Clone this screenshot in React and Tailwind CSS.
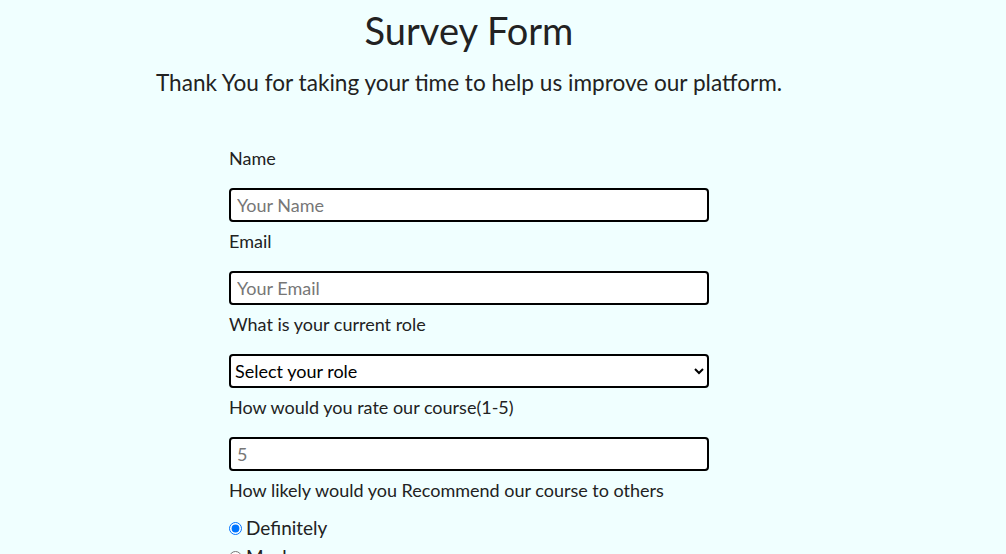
export default function App() {
  const font = { fontFamily: '"Lato", "Liberation Sans", sans-serif' };
  const fields = [
    { label: "Name", type: "text", placeholder: "Your Name" },
    { label: "Email", type: "email", placeholder: "Your Email" },
  ];

  return (
    <div className="min-h-[554px] bg-[#f0ffff] text-[#222]" style={font}>
      <div className="w-[938px] flex flex-col items-center">
        <h1 className="text-[38px] leading-[52px] mt-[4px] font-normal">Survey Form</h1>
        <p className="text-[22.6px] leading-[30px] mt-[12px]">
          Thank You for taking your time to help us improve our platform.
        </p>

        <form className="w-[480px] mt-[41px]">
          {fields.map((f) => (
            <div key={f.label}>
              <label className="block text-[18px] leading-[24px] pt-[7px] mb-[18px]">{f.label}</label>
              <input
                type={f.type}
                placeholder={f.placeholder}
                className="block w-full h-[34px] border-2 border-black rounded-[4px] bg-white px-[6px] text-[18px] placeholder:text-[#777] outline-none"
              />
            </div>
          ))}

          <label className="block text-[18px] leading-[24px] pt-[7px] mb-[18px]">What is your current role</label>
          <select className="block w-full h-[34px] border-2 border-black rounded-[4px] bg-white px-0 text-[18px] text-black outline-none">
            <option>Select your role</option>
            <option>Student</option>
            <option>Full Time Job</option>
            <option>Other</option>
          </select>

          <label className="block text-[18px] leading-[24px] pt-[7px] mb-[18px]">How would you rate our course(1-5)</label>
          <input
            type="number"
            min="1"
            max="5"
            placeholder="5"
            className="block w-full h-[34px] border-2 border-black rounded-[4px] bg-white px-[6px] text-[18px] placeholder:text-[#777] outline-none"
          />

          <label className="block text-[18px] leading-[24px] pt-[7px] mb-[14px]">
            How likely would you Recommend our course to others
          </label>
          <div className="flex flex-col gap-[5px] text-[19px] leading-[24px]">
            <label className="flex items-center gap-[4px]">
              <input type="radio" name="rec" defaultChecked className="m-0 w-[13px] h-[13px]" />
              Definitely
            </label>
            <label className="flex items-center gap-[4px]">
              <input type="radio" name="rec" className="m-0 w-[13px] h-[13px]" />
              Maybe
            </label>
            <label className="flex items-center gap-[4px]">
              <input type="radio" name="rec" className="m-0 w-[13px] h-[13px]" />
              Not Sure
            </label>
          </div>
        </form>
      </div>
    </div>
  );
}
